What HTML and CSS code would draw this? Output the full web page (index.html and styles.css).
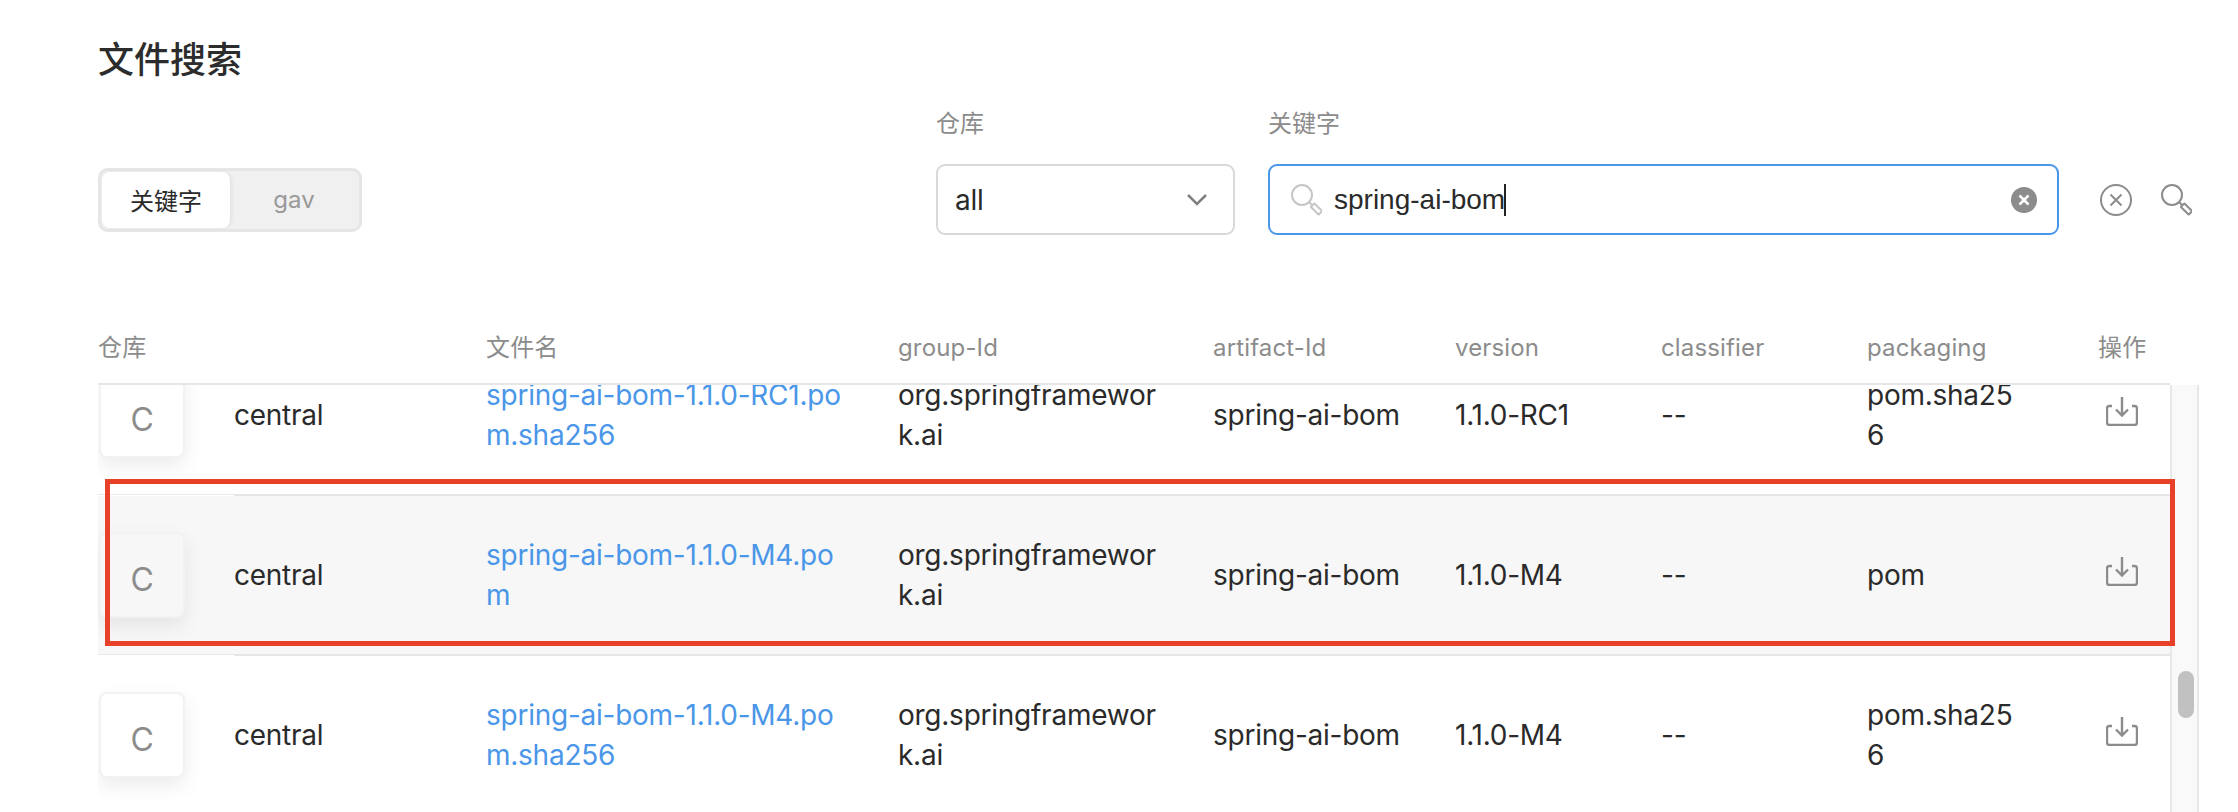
FILE: index.html
```html
<!DOCTYPE html>
<html lang="zh-CN">
<head>
<meta charset="utf-8">
<title>文件搜索</title>
<link rel="stylesheet" href="styles.css">
</head>
<body>
<svg class="sprite" width="0" height="0" aria-hidden="true">
  <symbol id="i-search" viewBox="0 0 32 32">
    <circle cx="12" cy="11" r="10"/>
    <path d="M19 18l3 3"/>
    <rect x="24" y="19.500" width="5" height="11" rx="0.500" transform="rotate(-45 26.500 25)"/>
  </symbol>
  <symbol id="i-down" viewBox="0 0 32 30">
    <path d="M6 10H3.500Q1 10 1 12.500V26.500Q1 29 3.500 29H28.500Q31 29 31 26.500V12.500Q31 10 28.500 10H26"/>
    <path d="M16 1V19M10 13.500L16 19.500L22 13.500"/>
  </symbol>
</svg>
<main class="page">
  <h1 class="title">文件搜索</h1>
  <section class="filters">
    <div class="segment">
      <span class="seg-item seg-active">关键字</span>
      <span class="seg-item">gav</span>
    </div>
    <div class="field field-repo">
      <label class="field-label">仓库</label>
      <div class="control">
        <span class="control-text">all</span>
        <svg class="chevron" viewBox="0 0 20 12"><path d="M1 1l9 9 9-9"/></svg>
      </div>
    </div>
    <div class="field field-key">
      <label class="field-label">关键字</label>
      <div class="control control-focus">
        <svg class="ico ico-input"><use href="#i-search"/></svg>
        <span class="control-text input-text">spring-ai-bom</span><span class="caret"></span>
        <svg class="clear" viewBox="0 0 26 26"><circle cx="13" cy="13" r="13"/><path d="M8.500 8.500l9 9M17.500 8.500l-9 9"/></svg>
      </div>
    </div>
    <div class="actions">
      <svg class="x-circle" viewBox="0 0 32 32"><circle cx="16" cy="16" r="15"/><path d="M10.500 10.500l11 11M21.500 10.500l-11 11"/></svg>
      <svg class="ico"><use href="#i-search"/></svg>
    </div>
  </section>

  <div class="cols head">
    <span class="head-first">仓库</span>
    <span>文件名</span>
    <span>group-Id</span>
    <span>artifact-Id</span>
    <span>version</span>
    <span>classifier</span>
    <span>packaging</span>
    <span>操作</span>
  </div>

  <section class="table-wrap">
    <div class="table">
      <div class="rows">
        <div class="cols row">
          <div class="cell cell-badge"><div class="badge">C</div></div>
          <div class="cell">central</div>
          <div class="cell cell-file"><a class="link">spring-ai-bom-1.1.0-RC1.pom.sha256</a></div>
          <div class="cell cell-group">org.springframework.ai</div>
          <div class="cell">spring-ai-bom</div>
          <div class="cell">1.1.0-RC1</div>
          <div class="cell">--</div>
          <div class="cell cell-pack">pom.sha256</div>
          <div class="cell cell-op"><svg class="dl"><use href="#i-down"/></svg></div>
        </div>
        <div class="cols row row-hover">
          <div class="cell cell-badge"><div class="badge">C</div></div>
          <div class="cell">central</div>
          <div class="cell cell-file"><a class="link">spring-ai-bom-1.1.0-M4.pom</a></div>
          <div class="cell cell-group">org.springframework.ai</div>
          <div class="cell">spring-ai-bom</div>
          <div class="cell">1.1.0-M4</div>
          <div class="cell">--</div>
          <div class="cell cell-pack">pom</div>
          <div class="cell cell-op"><svg class="dl"><use href="#i-down"/></svg></div>
        </div>
        <div class="cols row">
          <div class="cell cell-badge"><div class="badge">C</div></div>
          <div class="cell">central</div>
          <div class="cell cell-file"><a class="link">spring-ai-bom-1.1.0-M4.pom.sha256</a></div>
          <div class="cell cell-group">org.springframework.ai</div>
          <div class="cell">spring-ai-bom</div>
          <div class="cell">1.1.0-M4</div>
          <div class="cell">--</div>
          <div class="cell cell-pack">pom.sha256</div>
          <div class="cell cell-op"><svg class="dl"><use href="#i-down"/></svg></div>
        </div>
      </div>
    </div>
    <div class="scrollbar"><div class="thumb"></div></div>
  </section>
</main>
<div class="highlight"></div>
</body>
</html>
```
FILE: styles.css
```css
* { box-sizing: border-box; }
html, body { margin: 0; height: 812px; overflow: hidden; background: #fff; }
body {
  font-family: Inter, "Noto Sans CJK SC", sans-serif;
  color: #2a2a2a;
  font-size: 28px;
  letter-spacing: -0.25px;
}
.sprite { position: absolute; }
.page { height: 812px; padding: 36px 0 0 98px; display: flex; flex-direction: column; overflow: hidden; }
.title { margin: 0 0 23px; font-size: 36px; line-height: 48px; font-weight: 500; color: #2c2c2c; letter-spacing: 0; }

.filters { display: flex; align-items: flex-end; width: 2094px; }
.segment {
  width: 264px; height: 64px; margin-bottom: 3px; margin-right: auto;
  display: flex; padding: 4px;
  background: #f0f0f0; border-radius: 10px;
  box-shadow: inset 0 0 0 3px #e6e6e6;
}
.seg-item { flex: 0 0 128px; display: flex; align-items: center; justify-content: center; padding-bottom: 2px; font-size: 24px; color: #999; letter-spacing: 0; }
.seg-item + .seg-item { flex: 1; }
.seg-active { background: #fff; color: #2a2a2a; border-radius: 8px; box-shadow: 2px 0 4px rgba(0,0,0,.06); }

.field-label { display: block; font-size: 24px; line-height: 34px; color: #8c8c8c; margin-bottom: 23px; letter-spacing: 0; }
.field-repo { width: 299px; margin-right: 33px; }
.field-key { width: 791px; margin-right: 41px; }
.control {
  height: 71px; display: flex; align-items: center;
  border: 2px solid #d9d9d9; border-radius: 9px; padding: 0 18px 0 17px;
  font-size: 28px; color: #2a2a2a;
}
.control-focus { border-color: #4a96e8; padding: 0 20px 0 20px; }
.input-text { font-family: "Liberation Sans", sans-serif; letter-spacing: 0; }
.chevron { width: 20px; height: 12px; margin-left: auto; margin-right: 8px; fill: none; stroke: #808080; stroke-width: 2.500; }
.ico { width: 32px; height: 32px; fill: none; stroke: #8c8c8c; stroke-width: 2; }
.ico-input { stroke: #c6c6c6; margin-right: 12px; }
.caret { width: 2px; height: 32px; background: #222; margin-left: -1px; }
.clear { width: 26px; height: 26px; margin-left: auto; }
.clear circle { fill: #8c8c8c; }
.clear path { stroke: #fff; stroke-width: 2.500; fill: none; }
.actions { height: 71px; display: flex; align-items: center; gap: 28px; }
.x-circle { width: 32px; height: 32px; fill: none; stroke: #8c8c8c; stroke-width: 2; }

.cols { display: grid; grid-template-columns: 136px 252px 412px 315px 242px 206px 206px 231px 72px; width: 2072px; }
.head { margin-top: 96px; height: 52px; font-size: 24px; line-height: 34px; color: #8c8c8c; flex: none; letter-spacing: 0.15px; }
.head-first { grid-column: span 2; }

.table-wrap { flex: 1; min-height: 0; display: flex; width: 2101px; }
.table { width: 2072px; border-top: 2px solid #e6e6e6; overflow: hidden; }
.rows { margin-top: -49px; }
.row { height: 160px; }
.cell {
  display: flex; align-items: center;
  line-height: 40px;
  border-bottom: 2px solid #e6e6e6;
  word-break: break-all;
  background: #fff;
}
.row-hover .cell { background: #f7f7f7; }
.cell-file { padding-right: 44px; }
.cell-group { padding-right: 50px; }
.cell-pack { padding-right: 81px; }
.cell-op { padding-left: 8px; padding-bottom: 8px; }
.cell-badge {
  overflow: hidden; padding-left: 1px;
  border-bottom: 1px solid #eaeaea; margin-bottom: 1px;
}
.badge {
  width: 86px; height: 86px; padding-top: 10px;
  display: flex; align-items: center; justify-content: center;
  font-size: 32px; color: #8c8c8c;
  background: inherit; border: 2px solid #f2f2f2; border-radius: 8px;
  box-shadow: 0 8px 20px rgba(0,0,0,.08);
}
.row-hover .badge { background: #f7f7f7; }
.link { color: #4a96e8; }
.dl { width: 32px; height: 30px; fill: none; stroke: #8c8c8c; stroke-width: 2.400; }

.scrollbar {
  width: 29px; margin-top: 2px; position: relative;
  background: #f9f9f9; border-left: 2px solid #e8e8e8; border-right: 2px solid #e8e8e8;
}
.thumb { position: absolute; left: 6px; top: 286px; width: 16px; height: 47px; border-radius: 8px; background: #c1c1c1; }

.highlight {
  position: absolute; left: 105px; top: 479px; width: 2070px; height: 167px;
  border: 5px solid #e8412a;
  pointer-events: none;
}
```
